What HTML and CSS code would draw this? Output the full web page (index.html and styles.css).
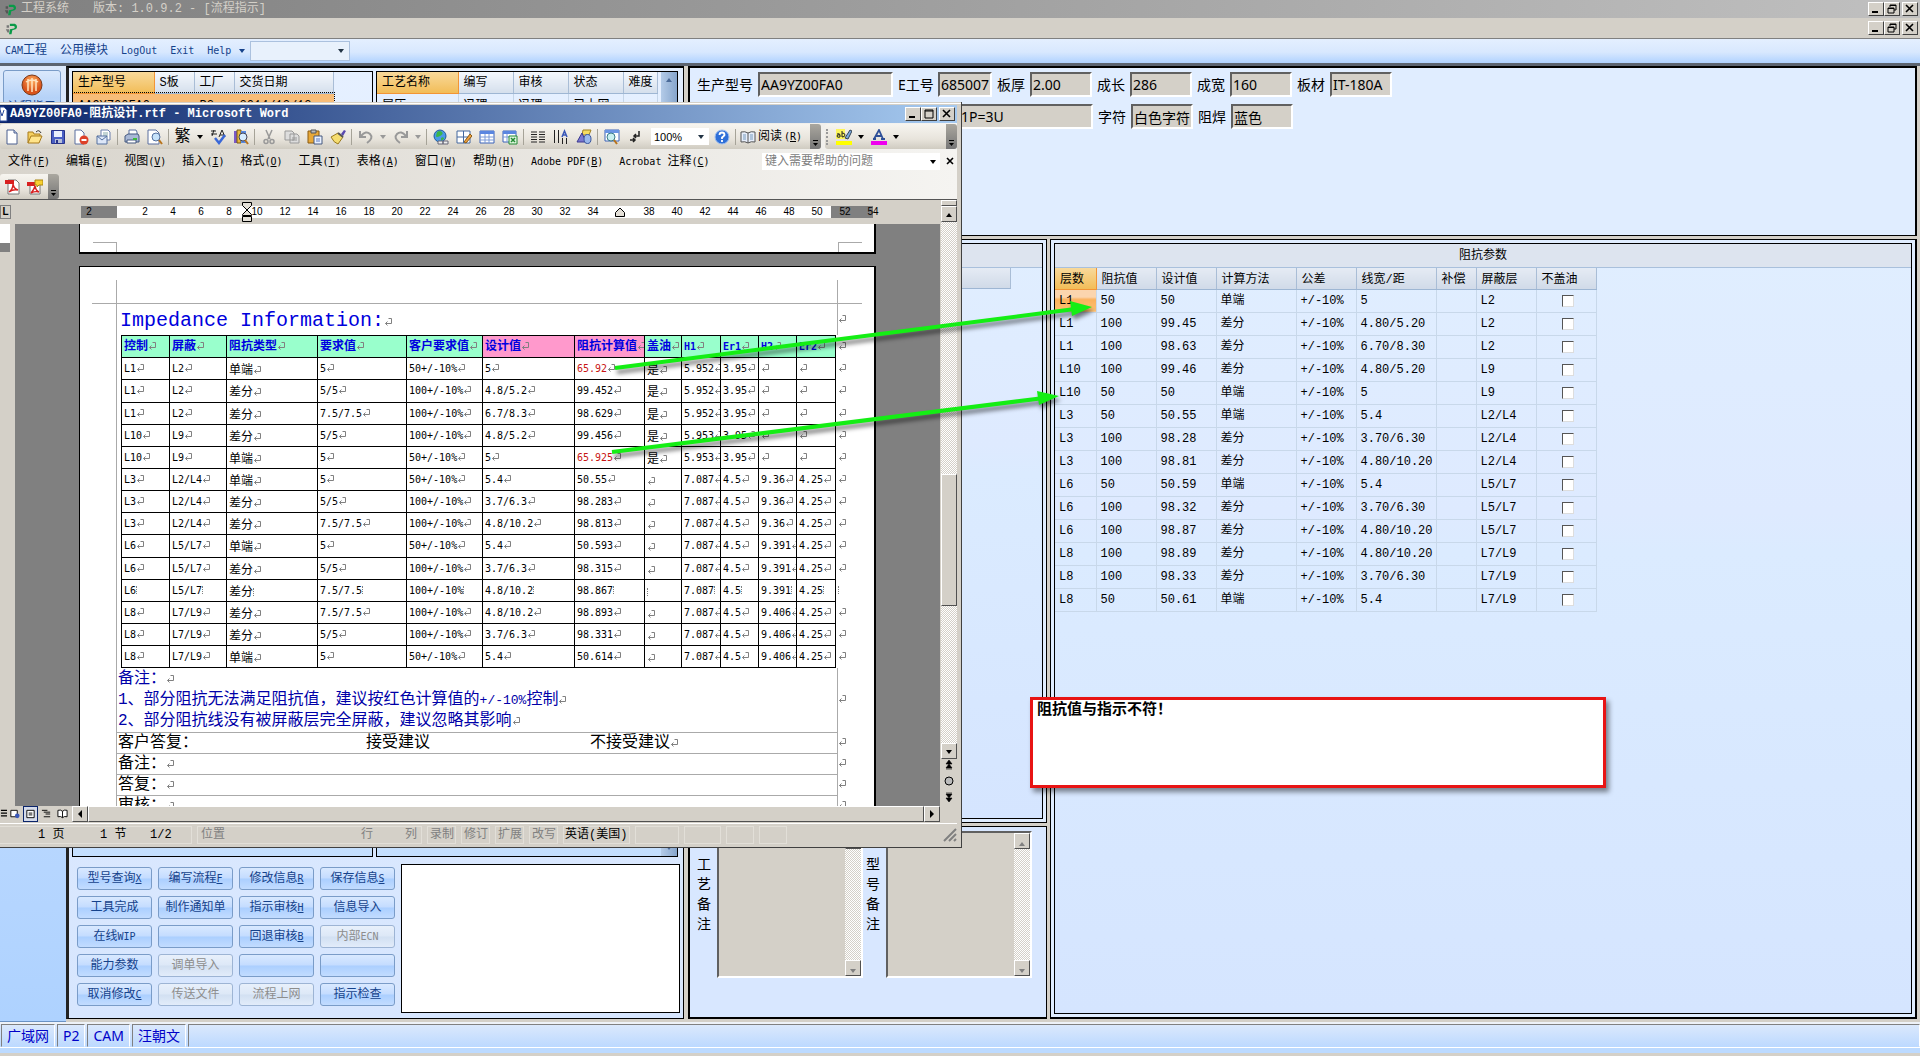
FILE: index.html
```html
<!DOCTYPE html>
<html lang="zh-CN">
<head>
    <meta charset="UTF-8">
    <meta name="viewport" content="width=device-width, initial-scale=1.0">
    <title>工程系统 - 流程指示</title>
    <link rel="stylesheet" href="styles.css">
</head>
<body>
    <header class="app-title">
        <svg class="logo" viewBox="0 0 16 16"><path d="M2 4h3v3H2zM1 9h4v4H3z" fill="#555"/><path d="M6 2h6c3 1 4 5 1 7l-4 1-1 5H5l1-6 5-1c2-1 1-3-1-3H6z" fill="#0a9a48"/></svg>
        <span>工程系统</span>
        <span class="version">版本: 1.0.9.2 - [流程指示]</span>
        <div class="win-btns">
            <button class="wb" aria-label="最小化"><svg viewBox="0 0 12 10"><path d="M2 8h6" stroke="#000" stroke-width="2"/></svg></button>
            <button class="wb" aria-label="还原"><svg viewBox="0 0 12 10"><path d="M4 3V1h6v5H8M4 1.500h6M2 4h6v5H2zM2 4.500h6" fill="none" stroke="#000"/></svg></button>
            <button class="wb close" aria-label="关闭"><svg viewBox="0 0 12 10"><path d="M2 1l7 7M9 1l-7 7" stroke="#000" stroke-width="1.600"/></svg></button>
        </div>
    </header>
    <div class="mdi-bar">
        <svg class="logo" viewBox="0 0 16 16"><path d="M2 4h3v3H2zM1 9h4v4H3z" fill="#777"/><path d="M6 2h6c3 1 4 5 1 7l-4 1-1 5H5l1-6 5-1c2-1 1-3-1-3H6z" fill="#0a9a48"/></svg>
        <div class="win-btns">
            <button class="wb" aria-label="最小化子窗口"><svg viewBox="0 0 12 10"><path d="M2 8h6" stroke="#000" stroke-width="2"/></svg></button>
            <button class="wb" aria-label="还原子窗口"><svg viewBox="0 0 12 10"><path d="M4 3V1h6v5H8M4 1.500h6M2 4h6v5H2zM2 4.500h6" fill="none" stroke="#000"/></svg></button>
            <button class="wb close" aria-label="关闭子窗口"><svg viewBox="0 0 12 10"><path d="M2 1l7 7M9 1l-7 7" stroke="#000" stroke-width="1.600"/></svg></button>
        </div>
    </div>
    <nav class="app-menu">
        <button><span class="en">CAM</span>工程</button>
        <button>公用模块</button>
        <button class="en">LogOut</button>
        <button class="en">Exit</button>
        <button class="en">Help</button>
        <i class="tri"></i>
        <select aria-label="快速选择"><option></option></select>
    </nav>

    <main class="workspace">
        <aside class="sidebar">
            <button class="nav-item">
                <svg viewBox="0 0 22 22"><defs><radialGradient id="ball" cy=".3"><stop offset="0" stop-color="#ffb060"/><stop offset="1" stop-color="#d9541c"/></radialGradient></defs><circle cx="11" cy="11" r="10" fill="url(#ball)" stroke="#7a3a1a"/><path d="M7 5v12M11 4v14M15 5v12M5 8q6-4 12 0" stroke="#ffe3c0" fill="none" stroke-width="1.500"/></svg>
                流程指示
            </button>
        </aside>

        <section class="flow">
            <div class="grids">
                <div class="grid">
                    <table class="list orders">
                        <tr><th class="hot">生产型号</th><th>S板</th><th>工厂</th><th>交货日期</th></tr>
                        <tr class="current"><td>AA9YZ00FA0</td><td></td><td>P2</td><td>2014/12/12</td></tr>
                    </table>
                </div>
                <div class="grid">
                    <table class="list steps">
                        <tr><th class="hot">工艺名称</th><th>编写</th><th>审核</th><th>状态</th><th>难度</th></tr>
                        <tr><td>层压</td><td>冯理</td><td>冯理</td><td>已上网</td><td></td></tr>
                    </table>
                    <div class="blue-scroll"><i class="tri up"></i><i class="tri"></i></div>
                </div>
            </div>
            <div class="flow-foot">
                <div class="actions">
                    <button>型号查询<u>X</u></button><button>编写流程<u>F</u></button><button>修改信息<u>R</u></button><button>保存信息<u>S</u></button>
                    <button>工具完成</button><button>制作通知单</button><button>指示审核<u>H</u></button><button>信息导入</button>
                    <button>在线<span class="en">WIP</span></button><button aria-label="备用"></button><button>回退审核<u>B</u></button><button disabled>内部<span class="en">ECN</span></button>
                    <button>能力参数</button><button disabled>调单导入</button><button aria-label="备用"></button><button aria-label="备用"></button>
                    <button>取消修改<u>C</u></button><button disabled>传送文件</button><button disabled>流程上网</button><button>指示检查</button>
                </div>
                <textarea class="message" aria-label="消息"></textarea>
            </div>
        </section>

        <div class="detail">
            <section class="board">
                <div class="fields">
                    <label class="l-wide" for="model">生产型号</label><input class="f-wide" id="model" value="AA9YZ00FA0" readonly>
                    <label class="l-mid" for="eno">E工号</label><input class="f-mid" id="eno" value="685007" readonly>
                    <label for="thick">板厚</label><input id="thick" value="2.00" readonly>
                    <label for="len">成长</label><input id="len" value="286" readonly>
                    <label for="wid">成宽</label><input id="wid" value="160" readonly>
                    <label for="mat">板材</label><input id="mat" value="IT-180A" readonly>
                </div>
                <div class="fields second">
                    <input class="f-wide" aria-label="表面处理" value="1P=3U" readonly>
                    <label for="legend">字符</label><input id="legend" value="白色字符" readonly>
                    <label for="mask">阻焊</label><input id="mask" value="蓝色" readonly>
                </div>
            </section>
            <div class="lower">
                <div class="lower-left">
                    <section class="pane route"><div class="inner"><div class="pane-title"></div><div class="pane-head"></div></div></section>
                    <section class="notes">
                        <label for="note1">工艺备注</label>
                        <div class="note-box"><textarea id="note1" readonly></textarea><div class="old-scroll"><button aria-label="上"><i class="tri up"></i></button><button aria-label="下"><i class="tri"></i></button></div></div>
                        <label for="note2">型号备注</label>
                        <div class="note-box"><textarea id="note2" readonly></textarea><div class="old-scroll"><button aria-label="上"><i class="tri up"></i></button><button aria-label="下"><i class="tri"></i></button></div></div>
                    </section>
                </div>
                <section class="pane impedance">
                    <div class="inner">
                        <div class="pane-title">阻抗参数</div>
                        <table class="params">
                            <colgroup><col class="w41"><col class="w60"><col class="w60"><col class="w80"><col class="w60"><col class="w80"><col class="w40"><col class="w60"><col class="w60"></colgroup>
                            <thead><tr><th class="hot">层数</th><th>阻抗值</th><th>设计值</th><th>计算方法</th><th>公差</th><th>线宽/距</th><th>补偿</th><th>屏蔽层</th><th>不盖油</th></tr></thead>
                            <tbody id="params"></tbody>
                        </table>
                    </div>
                </section>
            </div>
        </div>
    </main>

    <footer class="app-status">
        <div class="cells"><span>广域网</span><span>P2</span><span>CAM</span><span>汪朝文</span><span class="fill"></span></div>
    </footer>

    <!-- Word 窗口 -->
    <section class="word">
        <div class="word-title">
            <svg class="doc-ico" viewBox="0 0 8 16"><path d="M0 1h4l3 3v11H0z" fill="#fff" stroke="#2a4a9c"/><path d="M0 4l2 6 2-6" fill="none" stroke="#2a4a9c"/></svg>
            <span>AA9YZ00FA0-阻抗设计.rtf - Microsoft Word</span>
            <div class="win-btns">
                <button class="wb" aria-label="最小化 Word"><svg viewBox="0 0 12 10"><path d="M2 8h6" stroke="#000" stroke-width="2"/></svg></button>
                <button class="wb" aria-label="最大化 Word"><svg viewBox="0 0 12 10"><path d="M2 1h8v8H2zM2 2h8" fill="none" stroke="#000"/></svg></button>
                <button class="wb close" aria-label="关闭 Word"><svg viewBox="0 0 12 10"><path d="M2 1l7 7M9 1l-7 7" stroke="#000" stroke-width="1.600"/></svg></button>
            </div>
        </div>

        <div class="bar tools">
            <div class="strip main-strip">
                <button aria-label="新建"><svg viewBox="0 0 16 16"><path d="M3 1h7l3 3v11H3z" fill="#fff" stroke="#4a5f8f"/><path d="M10 1v3h3" fill="#cdd8ee" stroke="#4a5f8f"/></svg></button>
                <button aria-label="打开"><svg viewBox="0 0 16 16"><path d="M1 14V3h5l1 2h6v3" fill="#f5d060" stroke="#a87b1c"/><path d="M1 14l3-7h11l-3 7z" fill="#ffe48a" stroke="#a87b1c"/><path d="M9 3q3-3 5 1" stroke="#333" fill="none"/></svg></button>
                <button aria-label="保存"><svg viewBox="0 0 16 16"><path d="M1.500 1.500h13v13h-13z" fill="#4a5fc4" stroke="#28348a"/><path d="M4 2h8v6H4z" fill="#e8eefc"/><path d="M5 10h7v4H5z" fill="#b8c0d8"/><path d="M6 11h2v3H6z" fill="#28348a"/></svg></button>
                <button aria-label="权限"><svg viewBox="0 0 16 16"><path d="M2 1h6l3 3v11H2z" fill="#fff" stroke="#5a6f9f"/><circle cx="11" cy="11" r="4.500" fill="#dd4028"/><path d="M8.500 11h5" stroke="#fff" stroke-width="2"/></svg></button>
                <button aria-label="邮件"><svg viewBox="0 0 16 16"><path d="M5 1h7l2 2v8H5z" fill="#fff" stroke="#6a7fae"/><path d="M7 4h5M7 6h5" stroke="#8aa"/><path d="M1 7h10v8H1z" fill="#dde7f8" stroke="#54709f"/><path d="M1 7l5 4 5-4" fill="none" stroke="#54709f"/></svg></button>
                <i class="sep"></i>
                <button aria-label="打印"><svg viewBox="0 0 16 16"><path d="M5 6V1h7l1 2v3" fill="#fff" stroke="#5a6f9f"/><path d="M1 7l3-2h10l1 2v6H1z" fill="#a9b8d6" stroke="#45587f"/><path d="M3 11h9v3H3z" fill="#fff" stroke="#45587f"/><path d="M9 9h4v2H9z" fill="#3bbb3b"/></svg></button>
                <button aria-label="打印预览"><svg viewBox="0 0 16 16"><path d="M1 1h8l3 3v11H1z" fill="#fff" stroke="#5a6f9f"/><circle cx="9" cy="8" r="4" fill="#c6e2fa" stroke="#54709f"/><path d="M12 11l3 4" stroke="#b8741c" stroke-width="2"/></svg></button>
                <i class="sep"></i>
                <button class="fan">繁</button><button class="drop" aria-label="繁简选项"><i class="tri"></i></button>
                <button aria-label="拼写"><svg viewBox="0 0 16 16"><path d="M1 2h5M1 5h6M4 1L2 7M9 8l3-7 3 7M10 6h4" fill="none" stroke="#222"/><path d="M5 9l4 5 6-8" fill="none" stroke="#3a68d8" stroke-width="2.500"/></svg></button>
                <button aria-label="信息检索"><svg viewBox="0 0 16 16"><path d="M1 2h3v12H1z" fill="#7a58c8"/><path d="M4 1h4v13H4z" fill="#e8b840" stroke="#7a5a10"/><path d="M8 2h5v12H8z" fill="#5a8ae0"/><circle cx="10" cy="8" r="4" fill="#d6ecff" stroke="#445"/><path d="M12 11l3 4" stroke="#b8741c" stroke-width="2"/></svg></button>
                <i class="sep"></i>
                <button aria-label="剪切"><svg viewBox="0 0 16 16"><path d="M5 1l4 9M11 1L7 10" stroke="#999" stroke-width="1.500"/><circle cx="5" cy="12.500" r="2" fill="none" stroke="#999" stroke-width="1.500"/><circle cx="11" cy="12.500" r="2" fill="none" stroke="#999" stroke-width="1.500"/></svg></button>
                <button aria-label="复制"><svg viewBox="0 0 16 16"><path d="M1 2h7l2 2v7H1zM6 5h7l2 2v7H6z" fill="#ddd" stroke="#999"/><path d="M8 9h5M8 11h5" stroke="#999"/></svg></button>
                <button aria-label="粘贴"><svg viewBox="0 0 16 16"><path d="M1 2h11v12H1z" fill="#e8a838" stroke="#8a5a10"/><path d="M4 1h5v3H4z" fill="#bbb" stroke="#555"/><path d="M7 7h8v8H7z" fill="#eaf1ff" stroke="#45587f"/><path d="M9 10h4M9 12h4" stroke="#5a7ac0"/></svg></button>
                <button aria-label="格式刷"><svg viewBox="0 0 16 16"><path d="M11 5l3-4 2 1-3 5z" fill="#5a4ab0"/><path d="M1 8l7-4 5 4-5 7q-4-1-7-7z" fill="#f5dd70" stroke="#9a7a20"/><path d="M8 4l5 4" stroke="#555" stroke-width="2"/></svg></button>
                <i class="sep"></i>
                <button aria-label="撤消"><svg viewBox="0 0 16 16"><path d="M2 2v6h6" fill="none" stroke="#999" stroke-width="2"/><path d="M3 7q5-6 9-2t-3 9" fill="none" stroke="#999" stroke-width="2"/></svg></button><button class="drop grey" aria-label="撤消列表"><i class="tri"></i></button>
                <button aria-label="恢复"><svg viewBox="0 0 16 16"><path d="M14 2v6H8" fill="none" stroke="#999" stroke-width="2"/><path d="M13 7Q8 1 4 5t3 9" fill="none" stroke="#999" stroke-width="2"/></svg></button><button class="drop grey" aria-label="恢复列表"><i class="tri"></i></button>
                <i class="sep"></i>
                <button aria-label="超链接"><svg viewBox="0 0 16 16"><circle cx="7" cy="7" r="6" fill="#4a9ae8" stroke="#1e5a9c"/><path d="M4 3q3-2 5 0t-2 4-4 0zM8 9q3-2 3 1l-3 2z" fill="#3bb54a"/><path d="M5 12h5v3H5zM10 12h5v3h-5z" fill="#eee" stroke="#667"/></svg></button>
                <button aria-label="表格和边框"><svg viewBox="0 0 16 16"><path d="M1 2h13v12H1zM1 8h13M7.500 2v12" fill="#fff" stroke="#45689f"/><path d="M8 13l6-8 2 2-6 7z" fill="#f0a040" stroke="#8a5a10"/></svg></button>
                <button aria-label="插入表格"><svg viewBox="0 0 16 16"><path d="M1 2h14v12H1z" fill="#fff" stroke="#3a62b8"/><path d="M1 2h14v3H1z" fill="#5a86e0"/><path d="M1 8h14M1 11h14M6 5v9M10 5v9" stroke="#7a9ad8"/></svg></button>
                <button aria-label="插入 Excel"><svg viewBox="0 0 16 16"><path d="M1 2h13v11H1z" fill="#fff" stroke="#3a62b8"/><path d="M1 2h13v3H1z" fill="#5a86e0"/><path d="M1 8h13M5 5v8" stroke="#7a9ad8"/><path d="M7 7h8v8H7z" fill="#dff5df" stroke="#228a32"/><path d="M9 9l4 4M13 9l-4 4" stroke="#228a32" stroke-width="1.500"/></svg></button>
                <i class="sep"></i>
                <button aria-label="分栏"><svg viewBox="0 0 16 16"><path d="M1 3h6M1 5.500h6M1 8h6M1 10.500h6M1 13h6M9 3h6M9 5.500h6M9 8h6M9 10.500h6M9 13h6" stroke="#222"/></svg></button>
                <button aria-label="文字方向"><svg viewBox="0 0 16 16"><path d="M1.500 1v13M5.500 1v13M9.500 9v6M13.500 9v6" stroke="#222"/><path d="M9 8l2.500-6L14 8M10 6h3" fill="none" stroke="#3a58b8" stroke-width="1.500"/></svg></button>
                <button aria-label="绘图"><svg viewBox="0 0 16 16"><path d="M7 1h8l-2 5H6z" fill="#f5dc60" stroke="#a08020"/><path d="M1 13L6 4l4 9z" fill="#7a78d0" stroke="#3a3890"/><ellipse cx="11.500" cy="10" rx="3.500" ry="4.500" fill="#9ab8ec" stroke="#3a58a0"/></svg></button>
                <i class="sep"></i>
                <button aria-label="文档结构图"><svg viewBox="0 0 16 16"><path d="M1 1h14v11H1z" fill="#fff" stroke="#3a62b8"/><path d="M1 1h14v3H1z" fill="#6a94e4"/><circle cx="7" cy="8" r="4" fill="#c9f0f0" stroke="#3a7a8a"/><path d="M10 11l3 4" stroke="#b8741c" stroke-width="2"/></svg></button>
                <button aria-label="显示标记"><svg viewBox="0 0 16 16"><path d="M12 2v5H7M9 5L7 7l2 2M3 11h5M6 9l2 2-2 2" fill="none" stroke="#222" stroke-width="1.500"/></svg></button>
                <select class="zoom" aria-label="显示比例"><option>100%</option></select>
                <button aria-label="帮助"><svg viewBox="0 0 16 16"><circle cx="8" cy="8" r="7" fill="#2f6fd8" stroke="#9fbff0"/><path d="M5.500 6q0-2.500 2.500-2.500T10.500 6Q10 7 8 8.500V10M8 11v2" stroke="#fff" stroke-width="1.800" fill="none"/></svg></button>
                <i class="sep"></i>
                <button class="read"><svg viewBox="0 0 16 16"><path d="M8 4Q5 2 1 3v10q4-1 7 1 3-2 7-1V3Q11 2 8 4v10" fill="#e7eefb" stroke="#555"/><path d="M3 6h3M3 8h3M3 10h3M10 6h3M10 8h3M10 10h3" stroke="#79b"/></svg>阅读<span class="en">(<u>R</u>)</span></button>
                <i class="end"></i>
            </div>
            <div class="strip color-strip">
                <i class="grip"></i>
                <button aria-label="突出显示"><svg viewBox="0 0 16 16"><path d="M0 0h9v10H0z" fill="#fdf65a"/><path d="M1 5q3-1 3 1v2Q1 9 1 7t3-1M6 2v6q3 0 3-2t-3-2" fill="none" stroke="#222"/><path d="M9 9l5-8 2 1-4 8z" fill="#7aa8e0" stroke="#345"/><path d="M0 12h16v4H0z" fill="#ffff00"/></svg></button><button class="drop" aria-label="突出显示颜色"><i class="tri"></i></button>
                <button aria-label="字体颜色"><svg viewBox="0 0 16 16"><path d="M3 10L8 1l4 9M5 7h6M2 10h3M10 10h4" fill="none" stroke="#2e4f98" stroke-width="1.800"/><path d="M0 12h16v4H0z" fill="#ee00ee"/></svg></button><button class="drop" aria-label="字体颜色列表"><i class="tri"></i></button>
                <i class="end"></i>
            </div>
        </div>

        <nav class="bar word-menu">
            <button>文件<span class="en">(<u>F</u>)</span></button>
            <button>编辑<span class="en">(<u>E</u>)</span></button>
            <button>视图<span class="en">(<u>V</u>)</span></button>
            <button>插入<span class="en">(<u>I</u>)</span></button>
            <button>格式<span class="en">(<u>O</u>)</span></button>
            <button>工具<span class="en">(<u>T</u>)</span></button>
            <button>表格<span class="en">(<u>A</u>)</span></button>
            <button>窗口<span class="en">(<u>W</u>)</span></button>
            <button>帮助<span class="en">(<u>H</u>)</span></button>
            <button><span class="en">Adobe PDF(<u>B</u>)</span></button>
            <button><span class="en">Acrobat </span>注释<span class="en">(<u>C</u>)</span></button>
            <div class="ask"><input aria-label="帮助问题" placeholder="键入需要帮助的问题"><i class="tri"></i></div>
            <button class="x" aria-label="关闭文档"><svg viewBox="0 0 8 8"><path d="M1 1l6 6M7 1L1 7" stroke="#000" stroke-width="1.600"/></svg></button>
        </nav>

        <div class="bar pdf-bar">
            <div class="strip pdf-strip">
                <button aria-label="转换为 PDF"><svg viewBox="0 0 16 16"><path d="M4 1h8l3 3v11H4z" fill="#fff" stroke="#777"/><path d="M1 1h9v4H1z" fill="#d82020"/><path d="M5 13q4-3 4-8 1 5 5 6-5-1-9 2" fill="none" stroke="#d82020" stroke-width="1.400"/></svg></button>
                <button aria-label="转换并审阅"><svg viewBox="0 0 16 16"><path d="M3 4h8l2 2v9H3z" fill="#fff" stroke="#777"/><path d="M0 3h8v4H0z" fill="#d82020"/><path d="M4 14q3-3 4-7 1 5 4 6-4-1-8 1" fill="none" stroke="#d82020" stroke-width="1.400"/><path d="M8 1h8v5h-4l-2 2V6H8z" fill="#f8d030" stroke="#a88410"/></svg></button>
                <i class="end"></i>
            </div>
        </div>

        <div class="word-body">
            <div class="word-left">
                <div class="ruler">
                    <span class="tab">L</span>
                    <div class="dark first">2</div>
                    <div class="scale" id="scale"></div>
                    <div class="dark last"><span>52</span><span>54</span></div>
                    <svg class="indent left" viewBox="0 0 10 20"><path d="M.500.500h9v3L5 8 .500 3.500zM5 8l4.500 4.500v1h-9v-1zM.500 14.500h9v5h-9z" fill="#e4e0d8" stroke="#000"/></svg>
                    <svg class="indent right" viewBox="0 0 10 10"><path d="M5 1l4.500 4.500v4h-9v-4z" fill="#e4e0d8" stroke="#000"/></svg>
                </div>
                <div class="canvas">
                    <div class="vruler"></div>
                    <div class="pages">
                        <div class="page prev"><i class="corner bl"></i><i class="corner br"></i></div>
                        <div class="page">
                            <div class="margins"><i class="corner tl"></i><i class="mid"></i><i class="corner tr"></i></div>
                            <div class="doc-row"><h1 class="cell"><span class="p">Impedance Information:</span></h1><i class="p"></i></div>
                            <div class="table-wrap">
                                <table class="imp">
                                    <thead><tr><th>控制</th><th>屏蔽</th><th>阻抗类型</th><th>要求值</th><th>客户要求值</th><th class="pink">设计值</th><th class="pink">阻抗计算值</th><th>盖油</th><th class="en">H1</th><th class="en">Er1</th><th class="en">H2</th><th class="en">Er2</th><td class="eol"></td></tr></thead>
                                    <tbody id="imp"></tbody>
                                </table>
                            </div>
                            <div class="doc-row"><div class="cell remark"><p class="p">备注：</p><p class="p">1、部分阻抗无法满足阻抗值，建议按红色计算值的<span class="lat">+/-10%</span>控制</p><p class="p">2、部分阻抗线没有被屏蔽层完全屏蔽，建议忽略其影响</p></div><i class="p"></i></div>
                            <div class="doc-row"><div class="cell reply"><span>客户答复：</span><span>接受建议</span><span class="p">不接受建议</span></div><i class="p"></i></div>
                            <div class="doc-row"><div class="cell p">备注：</div><i class="p"></i></div>
                            <div class="doc-row"><div class="cell p">答复：</div><i class="p"></i></div>
                            <div class="doc-row"><div class="cell p">审核：</div><i class="p"></i></div>
                        </div>
                    </div>
                </div>
                <div class="hscroll">
                    <div class="views">
                        <button aria-label="普通视图"><svg viewBox="0 0 12 12"><path d="M1 2h8M1 5h8M1 8h8" stroke="#000" stroke-width="1.300"/></svg></button>
                        <button aria-label="Web 版式"><svg viewBox="0 0 12 12"><path d="M2 2h7v7H2z" fill="#fff" stroke="#000"/><circle cx="9" cy="8" r="2.500" fill="#3a58b8"/></svg></button>
                        <button class="on" aria-label="页面视图"><svg viewBox="0 0 12 12"><path d="M2 2h8v8H2zM4 5h4M4 7h4" fill="#fff" stroke="#000"/></svg></button>
                        <button aria-label="大纲视图"><svg viewBox="0 0 12 12"><path d="M1 2h6M3 4h7M5 6h5M3 9h7" stroke="#000"/></svg></button>
                        <button aria-label="阅读版式"><svg viewBox="0 0 12 12"><path d="M6 3Q4 1 1 2v7q3-1 5 1 2-2 5-1V2Q8 1 6 3v7" fill="#fff" stroke="#000"/></svg></button>
                    </div>
                    <button class="raised" aria-label="左"><svg viewBox="0 0 8 8"><path d="M6 0v8L2 4z"/></svg></button>
                    <div class="raised thumb"></div>
                    <button class="raised" aria-label="右"><svg viewBox="0 0 8 8"><path d="M2 0v8l4-4z"/></svg></button>
                </div>
            </div>
            <div class="vscroll">
                <i class="raised splitbox"></i>
                <button class="raised" aria-label="向上"><i class="tri up"></i></button>
                <div class="track"><div class="raised vthumb"></div></div>
                <button class="raised" aria-label="向下"><i class="tri"></i></button>
                <button aria-label="上一页"><svg viewBox="0 0 10 10"><path d="M5 0l3 4H2zM5 4l3 4H2zM2 9h6" stroke="#000" stroke-width=".600"/></svg></button>
                <button aria-label="选择浏览对象"><svg viewBox="0 0 10 10"><circle cx="5" cy="5" r="4" fill="#bbb" stroke="#000"/></svg></button>
                <button aria-label="下一页"><svg viewBox="0 0 10 10"><path d="M5 10l3-4H2zM5 6l3-4H2zM2 1h6" stroke="#000" stroke-width=".600"/></svg></button>
            </div>
        </div>

        <div class="word-status">
            <div class="s1"><span>1 页</span><span>1 节</span><span>1/2</span></div>
            <div class="s2"><span>位置</span><span>行</span><span>列</span></div>
            <div class="dim">录制</div><div class="dim">修订</div><div class="dim">扩展</div><div class="dim">改写</div>
            <div class="lang">英语(美国)</div>
            <div class="b1"></div><div class="b2"></div><div class="b3"></div><div class="b3"></div>
            <svg class="size-grip" viewBox="0 0 14 14"><path d="M1 13L13 1M6 13l7-7M11 13l2-2" stroke="#808080" stroke-width="2"/></svg>
        </div>
    </section>

    <svg class="arrows" viewBox="600 280 500 190">
        <path d="M615 368L1075 309M612 452L1044 398" stroke="#14ee14" stroke-width="4"/>
        <path d="M1070 301l22 6-20 9zM1037 391l22 5-20 9z" fill="#14ee14"/>
    </svg>
    <div class="callout">阻抗值与指示不符！</div>

    <script src="script.js"></script>
</body>
</html>
```
FILE: styles.css
```css
* {
    box-sizing: border-box;
}
body {
    margin: 0;
    height: 100vh;
    display: flex;
    flex-direction: column;
    overflow: hidden;
    position: relative;
    background: #d4d0c8;
    color: #000;
    font-family: "Liberation Mono", "Noto Sans CJK SC", monospace;
    font-size: 12px;
    line-height: 16px;
}
button {
    font: inherit;
    color: inherit;
    background: none;
    border: 0;
    padding: 0;
    white-space: nowrap;
}
input, select, textarea {
    font: inherit;
    border-radius: 0;
    margin: 0;
    padding: 0;
}
table {
    border-collapse: collapse;
    table-layout: fixed;
}
.en {
    font-family: "DejaVu Sans Mono", "Noto Sans CJK SC", monospace;
    font-size: 10px;
}
.tri {
    display: inline-block;
    border: 3px solid transparent;
    border-top: 4px solid currentColor;
    border-bottom: 0;
}
.tri.up {
    border-top: 0;
    border-bottom: 4px solid currentColor;
}

/* title bars */
.app-title {
    height: 18px;
    flex: none;
    display: flex;
    align-items: center;
    gap: 4px;
    padding: 0 2px 0 4px;
    background: linear-gradient(to right, #808080, #c0c0c0);
    color: #d4d0c8;
}
.version {
    margin-left: 20px;
}
.logo {
    width: 13px;
    height: 15px;
}
.mdi-bar {
    height: 21px;
    flex: none;
    display: flex;
    align-items: center;
    padding: 0 2px 0 5px;
    border-bottom: 1px solid #808080;
}
.win-btns {
    display: flex;
    margin-left: auto;
}
.wb {
    width: 16px;
    height: 14px;
    display: flex;
    align-items: center;
    justify-content: center;
    background: #d4d0c8;
    border: 1px solid;
    border-color: #fff #404040 #404040 #fff;
}
.wb svg {
    width: 12px;
    height: 10px;
}
.wb.close {
    margin-left: 2px;
}
.app-menu {
    height: 27px;
    flex: none;
    display: flex;
    align-items: center;
    gap: 13px;
    padding: 0 5px;
    color: #15428b;
    background: linear-gradient(#e4efff, #d8e8fe 55%, #b0d2ff);
    border-bottom: 3px solid #5c6470;
}
.app-menu .tri {
    margin-left: -5px;
}
.app-menu select, .zoom {
    appearance: none;
    width: 100px;
    height: 20px;
    border: 1px solid #abc1de;
    background: url("data:image/svg+xml,%3Csvg xmlns='http://www.w3.org/2000/svg' width='6' height='4'%3E%3Cpath d='M0 0h6L3 4z' fill='%23234'/%3E%3C/svg%3E") no-repeat right 5px center #e8f1fc;
}
.app-menu select {
    margin-left: -8px;
}

/* workspace */
.workspace {
    flex: 1;
    min-height: 0;
    display: flex;
    padding-right: 2px;
    background: #d4d0c8;
}
.sidebar {
    flex: 0 0 66px;
    padding: 4px 5px 0 3px;
    background: linear-gradient(#dce9fb, #c2dcff 60%, #aed2ff);
    border-bottom: 1px solid #6a92c4;
}
.nav-item {
    width: 58px;
    height: 56px;
    display: flex;
    flex-direction: column;
    align-items: center;
    padding-top: 3px;
    gap: 4px;
    color: #15428b;
    background: linear-gradient(#dbe9fc, #b5d2f8 50%, #cfe3ff);
    border: 1px solid #7a9cc8;
    border-radius: 3px;
}
.nav-item svg {
    width: 22px;
    height: 22px;
}
.flow {
    flex: 0 0 618px;
    margin-bottom: 3px;
    display: flex;
    flex-direction: column;
    border: 1px solid #000;
    border-left: 3px solid #222;
    border-top-width: 2px;
    background: linear-gradient(#e2eeff, #d7e6fe);
    padding: 3px 3px 5px 3px;
}
.grids {
    flex: 1;
    display: grid;
    grid-template-columns: 301px 302px;
    gap: 3px;
}
.grid {
    display: flex;
    justify-content: space-between;
    border: 1px solid #000;
    background: linear-gradient(#e6f0ff, #c4dffe);
    align-items: flex-start;
    overflow: hidden;
}
.list th {
    height: 21px;
    padding: 2px 5px 0;
    text-align: left;
    font-weight: normal;
    white-space: nowrap;
    background: linear-gradient(#f4f8fd, #d5dfec);
    border-right: 1px solid #a9bdd6;
    border-bottom: 1px solid #9eb6d3;
}
.list td {
    height: 20px;
    padding: 4px 5px 0;
    white-space: nowrap;
    border-right: 1px solid #c5d5e8;
}
.list th.hot, .params th.hot {
    background: linear-gradient(#f8d99b, #f2bd58);
    border-color: #f29536;
}
.orders {
    width: 261px;
}
.orders th:nth-child(1) { width: 81px; }
.orders th:nth-child(2) { width: 40px; }
.orders th:nth-child(3) { width: 40px; }
.orders .current {
    background: #f8bd78;
    outline: 1px dotted #000;
}
.orders .current td {
    border-color: #f8bd78;
}
.steps {
    width: 281px;
}
.steps th:nth-child(1) { width: 81px; }
.steps th:nth-child(2), .steps th:nth-child(3), .steps th:nth-child(4) { width: 55px; }
.blue-scroll {
    width: 16px;
    align-self: stretch;
    display: flex;
    flex-direction: column;
    align-items: center;
    justify-content: space-between;
    padding: 6px 0;
    color: #4a6a98;
    background: linear-gradient(to right, #b4cbe8, #86a5cc);
}
.flow-foot {
    flex: none;
    display: flex;
    justify-content: space-between;
    padding: 7px 0 0 5px;
}
.actions {
    display: grid;
    grid-template-columns: repeat(4, 75px);
    grid-auto-rows: 23px;
    gap: 6px;
    padding-top: 3px;
}
.actions button {
    color: #15428b;
    border: 1px solid #7a9cc8;
    border-radius: 3px;
    background: linear-gradient(#d9e9ff, #c4dcff 48%, #abcfff 52%, #c2dcff);
}
.actions button:disabled {
    color: #8d8d8d;
    background: linear-gradient(#e8f0fb, #dde8f7 48%, #d2e0f2 52%, #e2ecfa);
    border-color: #9db4d4;
}
.actions u {
    font-family: "DejaVu Sans Mono", monospace;
    font-size: 10px;
}
.message {
    width: 279px;
    height: 149px;
    resize: none;
    background: #fff;
    border: 1px solid #000;
}

/* right side */
.detail {
    flex: 1;
    min-width: 0;
    margin: 0 1px 3px 4px;
    display: flex;
    flex-direction: column;
    gap: 3px;
}
.board {
    flex: 0 0 170px;
    border: 1px solid #000;
    border-width: 2px 2px 1px 2px;
    background: #e0edff;
    padding: 4px 7px;
}
.fields, .notes, .app-status {
    font-family: "Noto Sans", "Noto Sans CJK SC", sans-serif;
    font-size: 14px;
}
.fields {
    display: flex;
    align-items: center;
    margin-bottom: 7px;
}
.fields label {
    width: 33px;
    white-space: nowrap;
}
.fields .l-wide { width: 61px; }
.fields .l-mid { width: 40px; }
.fields input {
    width: 62px;
    height: 25px;
    margin-right: 5px;
    padding: 0 1px;
    background: #d4d0c8;
    border: 2px solid;
    border-color: #606060 #fff #fff #606060;
}
.fields .f-wide { width: 135px; }
.fields .f-mid { width: 54px; }
.fields.second {
    padding-left: 261px;
}
.lower {
    flex: 1;
    min-height: 0;
    display: flex;
    gap: 3px;
}
.lower-left {
    flex: 0 0 359px;
    min-width: 0;
    display: flex;
    flex-direction: column;
    gap: 3px;
}
.pane {
    border: 1px solid #000;
    padding: 3px;
    display: flex;
    background: #e0edff;
}
.inner {
    flex: 1;
    min-width: 0;
    border: 1px solid #000;
    background: linear-gradient(#e0eeff 0, #deeaff 35%, #dbebff 40%, #d5e5ff);
}
.route {
    flex: 1;
}
.impedance {
    flex: 1;
    border-right-width: 2px;
    border-bottom-width: 2px;
}
.pane-title {
    height: 24px;
    line-height: 24px;
    text-align: center;
    background: #dde4ef;
    border-bottom: 1px solid #a9c0dc;
}
.pane-head {
    width: 318px;
    height: 21px;
    background: linear-gradient(#e5ebf4, #d0dae8);
    border-right: 1px solid #a9bdd6;
    border-bottom: 1px solid #9eb6d3;
}
.params {
    width: 541px;
}
.w40 { width: 40px; }
.w41 { width: 41px; }
.w60 { width: 60px; }
.w80 { width: 80px; }
.params th {
    height: 21px;
    padding: 4px 0 0 5px;
    line-height: 16px;
    text-align: left;
    font-weight: normal;
    white-space: nowrap;
    background: linear-gradient(#e5ebf4, #d0dae8);
    border-right: 1px solid #a9bdd6;
    border-bottom: 1px solid #9eb6d3;
}
.params td {
    height: 23px;
    padding: 0 0 0 4px;
    white-space: nowrap;
    border-right: 1px solid #c8d8ea;
    border-bottom: 1px solid #c8d8ea;
}
.params .here {
    background: linear-gradient(#fbd5ae 35%, #fbb15c 45%, #fcc274);
}
.params input {
    appearance: none;
    display: block;
    width: 12px;
    height: 12px;
    margin: 0 auto;
    background: #fff;
    border: 1px solid;
    border-color: #555 #ddd #ddd #555;
}
.notes {
    flex: 0 0 193px;
    display: flex;
    padding: 4px 14px 39px 7px;
    border: 1px solid #000;
    border-width: 1px 1px 2px 2px;
    background: #d8e7ff;
}
.notes label {
    flex: 0 0 20px;
    padding: 23px 5px 0 0;
    line-height: 20px;
    word-break: break-all;
}
.note-box {
    flex: 0 0 146px;
    min-width: 0;
    display: flex;
    border: 2px solid;
    border-color: #606060 #fff #fff #606060;
    margin-right: 3px;
}
.note-box:last-child {
    margin-right: 0;
}
.note-box textarea {
    flex: 1;
    min-width: 0;
    resize: none;
    border: 0;
    background: #d4d0c8;
}
.old-scroll, .track {
    background: repeating-conic-gradient(#fff 0 25%, #d4d0c8 0 50%) 0 0 / 2px 2px;
}
.old-scroll {
    flex: 0 0 16px;
    display: flex;
    flex-direction: column;
    justify-content: space-between;
    color: #808080;
}
.old-scroll button, .raised {
    width: 16px;
    height: 16px;
    line-height: 8px;
    background: #d4d0c8;
    border: 1px solid;
    border-color: #fff #505050 #505050 #fff;
}

/* status bar */
.app-status {
    height: 34px;
    flex: none;
    border-bottom: 3px solid #d4d0c8;
    border-top: 2px solid #eef2f8;
    background: #bcdaff;
    color: #0000c8;
}
.cells {
    display: flex;
    gap: 2px;
    padding-left: 1px;
    height: 24px;
    background: linear-gradient(#dce9fc, #bcd9ff);
    border-bottom: 1px solid #fff;
}
.cells span {
    padding: 0 5px;
    line-height: 22px;
    border: 1px solid;
    border-color: #808080 #fff transparent #808080;
}
.cells .fill {
    flex: 1;
}

/* Word window */
.word {
    position: absolute;
    left: 0;
    top: 102px;
    width: 962px;
    height: 746px;
    display: flex;
    flex-direction: column;
    padding: 3px 4px 2px 0;
    background: #d4d0c8;
    border: 1px solid #404040;
    border-left: 0;
    border-top: 0;
    box-shadow: inset 0 1px #d4d0c8, inset 0 2px #fff;
}
.word-title {
    flex: 0 0 18px;
    display: flex;
    align-items: center;
    padding-right: 2px;
    color: #fff;
    font-weight: bold;
    background: linear-gradient(to right, #0a246a, #a6caf0);
}
.doc-ico {
    width: 8px;
    height: 16px;
    margin-right: 2px;
}
.bar {
    display: flex;
    flex: none;
    background: linear-gradient(to right, #d8d4cc, #f5f4f1);
}
.tools {
    height: 27px;
    padding: 1px 0;
}
.strip {
    display: flex;
    align-items: center;
    height: 25px;
    background: linear-gradient(#f7f5f0, #e8e4dc 60%, #cfcbc1);
    border-radius: 3px;
}
.strip button {
    width: 23px;
    height: 20px;
    flex: none;
    display: flex;
    align-items: center;
    justify-content: center;
}
.strip svg {
    width: 16px;
    height: 16px;
}
.strip .drop {
    width: 12px;
}
.drop.grey {
    color: #999;
}
.strip .fan {
    font-size: 16px;
}
.strip .read {
    width: 66px;
    gap: 2px;
}
.sep {
    width: 1px;
    height: 16px;
    margin: 0 2px;
    background: #a6a398;
}
.zoom {
    width: 58px;
    height: 17px;
    margin: 0 1px 0 5px;
    padding-left: 3px;
    font-size: 11px;
    font-family: "Liberation Sans", sans-serif;
    border: 0;
    background-color: #fff;
}
.end {
    width: 11px;
    height: 25px;
    margin-left: auto;
    border-radius: 0 3px 3px 0;
    background: url("data:image/svg+xml,%3Csvg xmlns='http://www.w3.org/2000/svg' width='7' height='8'%3E%3Cpath d='M1 1.500h5' stroke='%23000'/%3E%3Cpath d='M1 4h5L3.500 7z'/%3E%3C/svg%3E") no-repeat center 15px, linear-gradient(#aaa79f, #767676);
}
.main-strip {
    width: 821px;
    margin-right: 4px;
}
.color-strip {
    flex: 1;
}
.grip {
    height: 16px;
    margin: 0 4px 0 1px;
    border-left: 2px dotted #999;
}
.word-menu {
    height: 23px;
    align-items: center;
    padding: 0 3px 0 8px;
    gap: 16px;
}
.ask {
    display: flex;
    align-items: center;
    width: 178px;
    height: 17px;
    margin-left: auto;
    padding-right: 4px;
    background: #fff;
}
.ask input {
    flex: 1;
    min-width: 0;
    border: 0;
    padding-left: 3px;
    background: none;
}
.ask input::placeholder {
    color: #808080;
    opacity: 1;
}
.word-menu .x {
    margin-left: -10px;
}
.x svg {
    width: 8px;
    height: 8px;
}
.pdf-bar {
    height: 27px;
    border-bottom: 1px solid #555;
    padding-top: 1px;
}
.pdf-strip {
    width: 59px;
}

.word-body {
    flex: 1;
    min-height: 0;
    display: flex;
}
.word-left {
    flex: 1;
    min-width: 0;
    display: flex;
    flex-direction: column;
}
.ruler {
    flex: 0 0 24px;
    position: relative;
    display: flex;
    align-items: center;
    font-family: "Liberation Sans", sans-serif;
    font-size: 10px;
    line-height: 12px;
    text-align: center;
}
.tab {
    width: 11px;
    height: 14px;
    margin-right: 70px;
    border: 1px solid #808080;
    font-weight: bold;
}
.dark {
    background: #808080;
    height: 12px;
}
.dark.first {
    width: 36px;
    padding-right: 20px;
}
.dark.last {
    width: 42px;
    display: flex;
}
.dark.last span {
    flex: 0 0 28px;
}
.scale {
    display: flex;
    padding-left: 14px;
    height: 12px;
    background: #fff;
}
.scale span {
    width: 28px;
}
.indent {
    position: absolute;
    width: 10px;
}
.indent.left {
    left: 242px;
    top: 2px;
    height: 20px;
}
.indent.right {
    left: 615px;
    top: 7px;
    height: 10px;
}
.canvas {
    flex: 1;
    min-height: 0;
    display: flex;
    overflow: hidden;
    background: #808080;
}
.vruler {
    flex: 0 0 15px;
    background: linear-gradient(#fff 19px, #808080 0 28px, #d4d0c8 0);
    border-right: 5px solid #d4d0c8;
}
.pages {
    padding-left: 64px;
}
.page {
    width: 797px;
    background: #fff;
    border-left: 1px solid #000;
    border-top: 1px solid #000;
    box-shadow: inset -2px 0 #000;
    height: 800px;
}
.page.prev {
    height: 30px;
    margin-bottom: 12px;
    display: flex;
    justify-content: space-between;
    align-items: flex-end;
    padding: 0 14px 2px 13px;
    border-top: 0;
    box-shadow: inset -2px -2px #000;
}
.corner {
    width: 24px;
    height: 10px;
    border: 0 solid #aaa;
}
.corner.bl { border-width: 1px 1px 0 0; }
.corner.br { border-width: 1px 0 0 1px; }
.corner.tl, .corner.tr {
    border-bottom-width: 1px;
}
.margins {
    display: flex;
    align-items: flex-end;
    height: 37px;
    padding-left: 12px;
}
.margins .mid {
    width: 722px;
    height: 24px;
    border: 1px solid #aaa;
    border-top: 0;
}
.doc-row {
    display: flex;
    align-items: center;
    padding-left: 36px;
}
.cell {
    width: 722px;
    margin: 0;
    padding-left: 1px;
    min-height: 21px;
    font-size: 16px;
    line-height: 20px;
    border: 1px solid #aaa;
    border-bottom: 0;
}
.doc-row h1 {
    height: 31px;
    padding-left: 3px;
    font-size: 20px;
    font-weight: normal;
    line-height: 34px;
    border-top: 0;
    color: #0000dc;
}
.remark {
    color: #0000a8;
    border-top: 0;
    padding-top: 1px;
}
.remark p {
    margin: 0;
    line-height: 21px;
}
.lat {
    font-size: 13px;
}
.reply {
    display: grid;
    grid-template-columns: 248px 224px 1fr;
}
/* paragraph mark */
.p::after, .imp th::after, .imp td::after {
    content: "";
    display: inline-block;
    width: 8px;
    height: 8px;
    background: url("data:image/svg+xml,%3Csvg xmlns='http://www.w3.org/2000/svg' width='8' height='8'%3E%3Cpath d='M4.500.500h3v5h-6M3.500 3.500l-2 2 2 2' fill='none' stroke='%23808080'/%3E%3C/svg%3E");
}
.table-wrap {
    margin-left: 36px;
    padding-left: 4px;
    border-left: 1px solid #aaa;
}
.imp {
    width: 726px;
}
.imp th, .imp td {
    height: 22px;
    padding: 0 0 0 2px;
    line-height: 16px;
    text-align: left;
    white-space: nowrap;
    overflow: hidden;
    border: 1px solid #000;
}
.imp th {
    color: #0000e0;
    background: #99ffcc;
}
.imp th.pink {
    background: #ff99cc;
}
.imp td {
    font-family: "DejaVu Sans Mono", monospace;
    font-size: 10px;
}
.imp td:nth-child(3), .imp td:nth-child(8) {
    font-family: "Noto Sans CJK SC", sans-serif;
    font-size: 12px;
}
.imp th:nth-child(1) { width: 48px; }
.imp th:nth-child(2) { width: 57px; }
.imp th:nth-child(3) { width: 91px; }
.imp th:nth-child(4) { width: 89px; }
.imp th:nth-child(5) { width: 76px; }
.imp th:nth-child(6) { width: 92px; }
.imp th:nth-child(7) { width: 70px; }
.imp th:nth-child(8) { width: 37px; }
.imp th:nth-child(9) { width: 39px; }
.imp th:nth-child(10), .imp th:nth-child(11) { width: 38px; }
.imp th:nth-child(12) { width: 39px; }
.imp .eol {
    border: 0;
}
.imp .red {
    color: #c81414;
}
.imp tbody tr:nth-child(7n+2) td {
    height: 23px;
}
.imp tbody tr:nth-child(11) td::after {
    width: 4px;
    background: none;
    border-left: 1px dotted #808080;
}
.hscroll {
    flex: 0 0 17px;
    display: flex;
    background: #d4d0c8;
}
.views {
    width: 72px;
    display: flex;
    justify-content: space-between;
    padding-right: 2px;
}
.views button {
    width: 16px;
    height: 16px;
    line-height: 8px;
}
.views button:first-child {
    width: 7px;
    overflow: hidden;
}
.views .on {
    border: 1px solid #0a246a;
    background: #d5dbea;
}
.views svg {
    width: 11px;
    height: 12px;
}
.raised svg {
    width: 8px;
    height: 8px;
}
.raised.thumb {
    flex: 1;
}
.vscroll {
    flex: 0 0 17px;
    display: flex;
    flex-direction: column;
    padding-bottom: 16px;
    border-left: 1px solid #d4d0c8;
}
.vscroll .splitbox {
    height: 6px;
}
.vscroll button {
    height: 16px;
}
.vscroll svg {
    width: 10px;
    height: 10px;
}
.track {
    flex: 1;
    padding-top: 252px;
}
.raised.vthumb {
    height: 132px;
}
.word-status {
    flex: 0 0 22px;
    display: flex;
    align-items: center;
    gap: 5px;
    border-top: 1px solid #fff;
}
.word-status div {
    height: 18px;
    white-space: nowrap;
    padding: 0 3px;
    border: 1px solid #e2dfd8;
}
.word-status .s1 {
    width: 192px;
    display: grid;
    grid-template-columns: 62px 50px 1fr;
    padding-left: 38px;
    border-left: 0;
}
.word-status .s2 {
    width: 225px;
    display: grid;
    grid-template-columns: 160px 44px 1fr;
    color: #808080;
}
.word-status .dim {
    width: 29px;
    padding: 0 2px;
    color: #808080;
}
.word-status .lang {
    width: 67px;
    padding: 0 1px;
}
.word-status .b1 { width: 44px; }
.word-status .b2 { width: 37px; }
.word-status .b3 { width: 28px; }
.size-grip {
    width: 14px;
    height: 14px;
    margin-left: auto;
}

/* annotations */
.arrows {
    position: absolute;
    left: 600px;
    top: 280px;
    width: 500px;
    height: 190px;
    pointer-events: none;
    filter: drop-shadow(2px 4px 2px rgba(0, 0, 0, 0.5));
}
.callout {
    position: absolute;
    left: 1030px;
    top: 697px;
    width: 576px;
    height: 91px;
    padding: 2px 4px;
    background: #fff;
    border: 3px solid #e81414;
    box-shadow: 3px 4px 5px rgba(0, 0, 0, 0.45);
    font-size: 15px;
    font-weight: bold;
    line-height: 18px;
}
```
FILE: script.js
```js
// 阻抗参数
const params = [
    ['L1', '50', '50', '单端', '5', 'L2'],
    ['L1', '100', '99.45', '差分', '4.80/5.20', 'L2'],
    ['L1', '100', '98.63', '差分', '6.70/8.30', 'L2'],
    ['L10', '100', '99.46', '差分', '4.80/5.20', 'L9'],
    ['L10', '50', '50', '单端', '5', 'L9'],
    ['L3', '50', '50.55', '单端', '5.4', 'L2/L4'],
    ['L3', '100', '98.28', '差分', '3.70/6.30', 'L2/L4'],
    ['L3', '100', '98.81', '差分', '4.80/10.20', 'L2/L4'],
    ['L6', '50', '50.59', '单端', '5.4', 'L5/L7'],
    ['L6', '100', '98.32', '差分', '3.70/6.30', 'L5/L7'],
    ['L6', '100', '98.87', '差分', '4.80/10.20', 'L5/L7'],
    ['L8', '100', '98.89', '差分', '4.80/10.20', 'L7/L9'],
    ['L8', '100', '98.33', '差分', '3.70/6.30', 'L7/L9'],
    ['L8', '50', '50.61', '单端', '5.4', 'L7/L9']
];
document.getElementById('params').innerHTML = params.map((r, i) => `
    <tr><td${i === 0 ? ' class="here"' : ''}>${r[0]}</td><td>${r[1]}</td><td>${r[2]}</td><td>${r[3]}</td>
    <td>+/-10%</td><td>${r[4]}</td><td></td><td>${r[5]}</td>
    <td><input type="checkbox" aria-label="不盖油 ${i + 1}"></td></tr>`).join('');

// 文档中的阻抗表
const imp = [
    'L1,L2,单端,5,50+/-10%,5,65.92,是,5.952,3.95,,',
    'L1,L2,差分,5/5,100+/-10%,4.8/5.2,99.452,是,5.952,3.95,,',
    'L1,L2,差分,7.5/7.5,100+/-10%,6.7/8.3,98.629,是,5.952,3.95,,',
    'L10,L9,差分,5/5,100+/-10%,4.8/5.2,99.456,是,5.953,3.95,,',
    'L10,L9,单端,5,50+/-10%,5,65.925,是,5.953,3.95,,',
    'L3,L2/L4,单端,5,50+/-10%,5.4,50.55,,7.087,4.5,9.36,4.25',
    'L3,L2/L4,差分,5/5,100+/-10%,3.7/6.3,98.283,,7.087,4.5,9.36,4.25',
    'L3,L2/L4,差分,7.5/7.5,100+/-10%,4.8/10.2,98.813,,7.087,4.5,9.36,4.25',
    'L6,L5/L7,单端,5,50+/-10%,5.4,50.593,,7.087,4.5,9.391,4.25',
    'L6,L5/L7,差分,5/5,100+/-10%,3.7/6.3,98.315,,7.087,4.5,9.391,4.25',
    'L6,L5/L7,差分,7.5/7.5,100+/-10%,4.8/10.2,98.867,,7.087,4.5,9.391,4.25',
    'L8,L7/L9,差分,7.5/7.5,100+/-10%,4.8/10.2,98.893,,7.087,4.5,9.406,4.25',
    'L8,L7/L9,差分,5/5,100+/-10%,3.7/6.3,98.331,,7.087,4.5,9.406,4.25',
    'L8,L7/L9,单端,5,50+/-10%,5.4,50.614,,7.087,4.5,9.406,4.25'
];
document.getElementById('imp').innerHTML = imp.map(line =>
    '<tr>' + line.split(',').map(v => `<td${v.startsWith('65.') ? ' class="red"' : ''}>${v}</td>`).join('') +
    '<td class="eol"></td></tr>').join('');

// 标尺刻度
let marks = '';
for (let n = 2; n <= 50; n += 2) {
    marks += `<span>${n === 36 ? '' : n}</span>`;
}
document.getElementById('scale').innerHTML = marks;
```
